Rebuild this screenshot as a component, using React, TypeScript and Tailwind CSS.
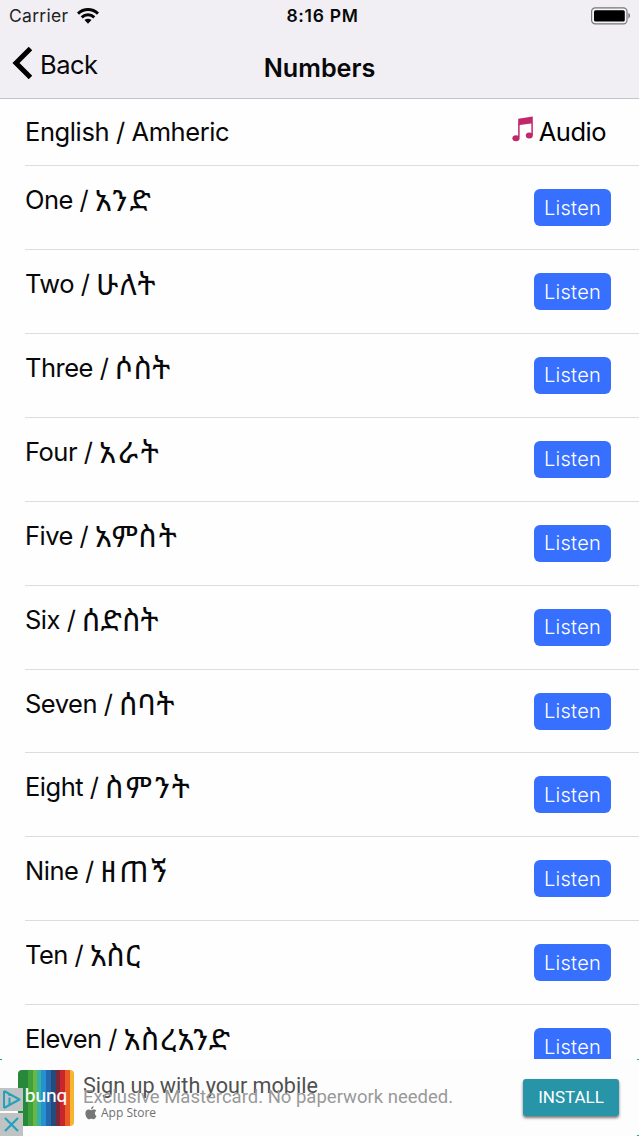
import clsx from "clsx";

const numbers = [
  { english: "One", amharic: "አንድ", tracking: "tracking-[2.5px]" },
  { english: "Two", amharic: "ሁለት", tracking: "tracking-[1.6px]" },
  { english: "Three", amharic: "ሶስት", tracking: "tracking-[0.2px]" },
  { english: "Four", amharic: "አራት", tracking: "tracking-[2.7px]" },
  { english: "Five", amharic: "አምስት", tracking: "tracking-[2.1px]" },
  { english: "Six", amharic: "ሰድስት", tracking: "tracking-[0.1px]" },
  { english: "Seven", amharic: "ሰባት", tracking: "tracking-[0.7px]" },
  { english: "Eight", amharic: "ስምንት", tracking: "tracking-[2.3px]" },
  { english: "Nine", amharic: "ዘጠኝ", tracking: "tracking-[2.5px]" },
  { english: "Ten", amharic: "አስር", tracking: "tracking-[0.2px]" },
  { english: "Eleven", amharic: "አስረአንድ", tracking: "tracking-[0.9px]" },
];

const stripes = [
  "w-[10px] bg-[#27883a]",
  "w-[5px] bg-[#3fa03c]",
  "w-[4px] bg-[#68b645]",
  "w-[4px] bg-[#36b1a5]",
  "w-[5px] bg-[#2591cf]",
  "w-[5px] bg-[#2468b0]",
  "w-[5px] bg-[#254b78]",
  "w-[4px] bg-[#7c2839]",
  "w-[5px] bg-[#c9252b]",
  "w-[5px] bg-[#e95b25]",
  "w-[4px] bg-[#f5b52e]",
];

function WifiIcon() {
  return (
    <svg className="ml-[9px] h-4 w-[22px]" viewBox="0 0 22 16">
      <g fill="none" stroke="#050505" strokeWidth="3">
        <path d="M1 5.6C6.8.2 15.2.2 21 5.6" />
        <path d="M4.7 9.4c3.7-3.4 8.9-3.4 12.6 0" />
      </g>
      <path d="M7.5 12.1c2-1.8 5-1.8 7 0L11 15.7z" fill="#050505" />
    </svg>
  );
}

function BatteryIcon() {
  return (
    <svg className="h-[18px] w-10" viewBox="0 0 40 18">
      <rect x="1.6" y="0.8" width="35.4" height="16" rx="3.6" fill="#f4f3f5" stroke="#77777a" strokeWidth="1.2" />
      <rect x="4" y="3.2" width="30.8" height="11.2" rx="1.5" fill="#000" />
      <path d="M38.3 6c2.3.7 2.3 4.7 0 5.4z" fill="#77777a" />
    </svg>
  );
}

function MusicIcon() {
  return (
    <svg className="h-[26px] w-[22px]" viewBox="0 0 22 26">
      <path d="M6.2 2.8 20.8.5v6.7L6.2 9.2z" fill="#c0286a" />
      <path d="M6.9 8v13M20.1 7v12" stroke="#c0286a" strokeWidth="1.5" />
      <ellipse cx="4" cy="22.3" rx="3.6" ry="3" fill="#c0286a" />
      <ellipse cx="17.3" cy="19.4" rx="3.5" ry="3" fill="#c0286a" />
    </svg>
  );
}

function AppleIcon() {
  return (
    <svg className="h-[14px] w-3" viewBox="0 0 12 14" fill="#777">
      <path d="M8.6.3C8.7 1.9 7.5 3.2 6 3.2 5.9 1.7 7.2.4 8.6.3Z" />
      <path d="M11.5 10.1c-.8 2-1.8 3.2-2.7 3.2-.9 0-1.3-.5-2.4-.5s-1.500.5-2.300.5C2.400 13.300.4 10.200.4 7.500c0-2.500 1.500-3.900 3.100-3.900 1 0 1.800.6 2.600.6.700 0 1.700-.7 2.900-.6 1 0 1.800.5 2.300 1.200-2 1.300-1.700 4.300.2 5.300Z" />
    </svg>
  );
}

function Header() {
  return (
    <header className="h-[99px] border-b border-[#c5c3c8] bg-[#f1eff3]">
      <div className="grid h-8 grid-cols-3 items-center pl-[9px] pr-[9px]">
        <div className="flex items-center text-[17.5px] text-[#222]">
          <span className="tracking-[0.3px]">Carrier</span>
          <WifiIcon />
        </div>
        <div className="pl-1.5 pt-px text-center text-[17.5px] font-semibold tracking-[0.7px]">8:16 PM</div>
        <div className="flex justify-end">
          <BatteryIcon />
        </div>
      </div>
      <div className="grid h-[66px] grid-cols-3 items-start pl-3 pr-3">
        <div className="flex items-center">
          <svg className="h-[62px] w-5" viewBox="0 0 20 62">
            <path d="m18.5 16.5-14.5 14.5 14.5 14.5" fill="none" stroke="#000" strokeWidth="5" />
          </svg>
          <span className="pl-2 pt-[3px] text-[25.5px] leading-8 tracking-[-0.5px]">Back</span>
        </div>
        <h1 className="pt-5 text-center text-[25.2px] font-semibold leading-8">Numbers</h1>
      </div>
    </header>
  );
}

function NumberRow({ english, amharic, tracking }: { english: string; amharic: string; tracking: string }) {
  return (
    <li className="flex h-[83.9px] shrink-0 items-start justify-between border-b border-[#dddce0] pr-7">
      <div className="flex gap-[6.5px] pt-[18px] leading-8 whitespace-nowrap">
        <span className="text-[25.5px] tracking-[-0.5px]">{english} /</span>
        <span className={clsx("text-[30px]", tracking)}>{amharic}</span>
      </div>
      <button className="mt-[23px] h-[37px] w-[77px] rounded-md bg-[#376ffe] text-[20px] font-light tracking-[0.3px] text-white">
        Listen
      </button>
    </li>
  );
}

function AdBanner() {
  return (
    <footer className="relative flex h-[77px] shrink-0 items-start bg-[#fdfdfd] pl-[18px] pr-5">
      <div className="relative mt-[11px] flex h-14 w-14 shrink-0 overflow-hidden rounded-[4px]">
        {stripes.map((stripe) => (
          <div key={stripe} className={stripe} />
        ))}
        <span className="absolute inset-x-0 top-[13px] text-center font-[Lato,sans-serif] text-[19px] leading-6 text-white [-webkit-text-stroke:0.2px_#fff]">
          bunq
        </span>
      </div>
      <div className="flex flex-1 flex-col pl-[9px] pt-[13px] font-[Roboto,sans-serif] whitespace-nowrap">
        <div className="h-[12px] text-[21.6px] leading-7 text-[#505050]">Sign up with your mobile</div>
        <div className="h-[20px] text-[18.5px] leading-[26px] text-[#999]">Exclusive Mastercard. No paperwork needed.</div>
        <div className="flex items-center gap-1 pl-0.5 pt-px font-['Open_Sans',sans-serif] text-[12px] font-medium leading-4 text-[#707070]">
          <AppleIcon />
          App Store
        </div>
      </div>
      <button className="mt-5 h-[37px] w-24 rounded-[3px] bg-[#2795a7] font-[Roboto,sans-serif] text-[17px] text-white shadow-[0_2px_3px_#777]">
        INSTALL
      </button>
      <div className="absolute bottom-0 left-0 flex flex-col gap-0.5">
        <svg className="h-[23px] w-[23px] bg-[#c0c3c4]" viewBox="0 0 23 23">
          <path d="M4 3v17M4 3l15.5 8.5L4 20" fill="none" stroke="#25a1ba" strokeWidth="2" strokeLinejoin="round" />
          <path d="M9.5 9.5v7M9.5 6.5v1.5" stroke="#25a1ba" strokeWidth="2" />
        </svg>
        <svg className="h-[23px] w-[23px] bg-[#c0c3c4]" viewBox="0 0 23 23">
          <path d="m5 5 13 13M18 5 5 18" fill="none" stroke="#25a1ba" strokeWidth="2.2" />
        </svg>
      </div>
      <span className="absolute left-0 top-0 h-px w-0.5 bg-[#25a18f]" />
      <span className="absolute right-0 top-0 h-px w-0.5 bg-[#25a18f]" />
      <span className="absolute bottom-0 right-0 h-px w-0.5 bg-[#25a18f]" />
    </footer>
  );
}

export default function App() {
  return (
    <div className="flex h-[1136px] w-[639px] flex-col overflow-hidden bg-[#fefefe] font-[Inter,'Noto_Sans_Ethiopic','Noto_Sans',sans-serif] text-[#08080a]">
      <Header />
      <main className="h-[960px] overflow-hidden pl-[25px]">
        <div className="flex h-[67.2px] items-start justify-between border-b border-[#dddce0] pr-[33px] text-[25.5px] leading-8">
          <span className="pt-[17px] tracking-[-0.4px]">English / Amheric</span>
          <div className="flex items-start gap-[5px] pt-[17px] text-black">
            <MusicIcon />
            <span className="tracking-[-0.5px]">Audio</span>
          </div>
        </div>
        <ul>
          {numbers.map((number) => (
            <NumberRow key={number.english} {...number} />
          ))}
        </ul>
      </main>
      <AdBanner />
    </div>
  );
}
